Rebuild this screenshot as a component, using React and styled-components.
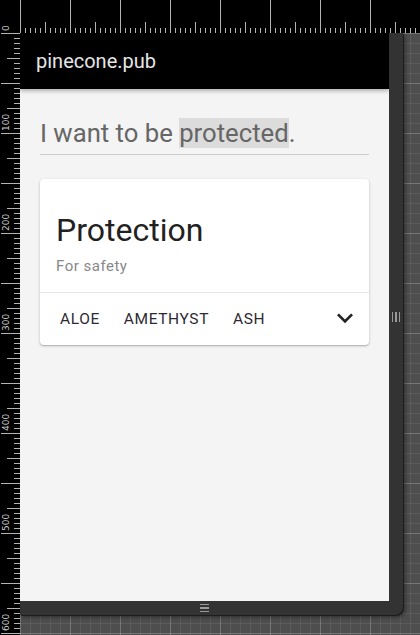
import styled, { createGlobalStyle } from 'styled-components';

const GlobalStyle = createGlobalStyle`
  html, body {
    margin: 0;
    padding: 0;
    background: #000;
  }
  body {
    font-family: Roboto, "Noto Sans", "Liberation Sans", sans-serif;
  }
`;

const Workspace = styled.div`
  display: grid;
  grid-template-columns: 20px 400px;
  grid-template-rows: 33px 602px;
  width: 420px;
  height: 635px;
  overflow: hidden;
  background: #000;
`;

const RulerBox = styled.div`
  background: #000;
  overflow: hidden;
  svg {
    display: block;
  }
  text {
    font-family: "DejaVu Sans", sans-serif;
    font-size: 9px;
    fill: #c8c8c8;
  }
  line {
    stroke: #b4b4b4;
    stroke-width: 1;
  }
`;

const Canvas = styled.div`
  overflow: hidden;
  background-color: #4e4e4e;
  background-image:
    linear-gradient(to right, rgba(255, 255, 255, 0.16) 1px, transparent 1px),
    linear-gradient(to bottom, rgba(255, 255, 255, 0.16) 1px, transparent 1px),
    linear-gradient(to right, rgba(255, 255, 255, 0.07) 1px, transparent 1px),
    linear-gradient(to bottom, rgba(255, 255, 255, 0.07) 1px, transparent 1px);
  background-size: 50px 50px, 50px 50px, 10px 10px, 10px 10px;
`;

const Device = styled.div`
  display: grid;
  grid-template-columns: 369px 14px;
  grid-template-rows: 568px 14px;
  width: max-content;
  background: #333;
  border-bottom-right-radius: 8px;
  box-shadow: 1px 1px 0 #1d1d1d, 2px 2px 4px rgba(0, 0, 0, 0.45);
`;

const Grip = styled.div`
  display: flex;
  flex-direction: ${p => (p.$vertical ? 'row' : 'column')};
  gap: 2px;
  align-self: center;
  justify-self: center;
  span {
    display: block;
    background: #9a9a9a;
    width: ${p => (p.$vertical ? '1.3px' : '9px')};
    height: ${p => (p.$vertical ? '10px' : '1.3px')};
  }
`;

const Screen = styled.div`
  display: flex;
  flex-direction: column;
  background: #f4f4f4;
  overflow: hidden;
`;

const AppBar = styled.header`
  position: relative;
  z-index: 1;
  flex-shrink: 0;
  display: flex;
  align-items: center;
  height: 56px;
  padding: 0 16px;
  background: #000;
  color: #e6e6e6;
  font-size: 20px;
  box-shadow: 0 2px 4px rgba(0, 0, 0, 0.28);
`;

const Content = styled.main`
  padding: 20px;
`;

const Headline = styled.div`
  padding: 8px 0 5px;
  border-bottom: 1px solid #cdcdcd;
  font-size: 25.7px;
  line-height: 32px;
  color: #666;
`;

const Highlight = styled.span`
  background: #dcdcdc;
`;

const Card = styled.section`
  margin-top: 24px;
  background: #fff;
  border-radius: 4px;
  box-shadow: 0 1px 3px rgba(0, 0, 0, 0.22), 0 1px 1px rgba(0, 0, 0, 0.12);
`;

const CardHeader = styled.div`
  padding: 31px 16px 16px;
  border-bottom: 1px solid #e6e6e6;
`;

const Title = styled.h2`
  margin: 0;
  font-size: 32px;
  line-height: 40px;
  font-weight: 400;
  color: #212121;
`;

const Subtitle = styled.p`
  margin: 6px 0 0;
  font-size: 15px;
  line-height: 20px;
  letter-spacing: 0.5px;
  color: #888;
`;

const Actions = styled.div`
  display: flex;
  align-items: center;
  height: 52px;
  padding-left: 8px;
`;

const TextButton = styled.button`
  height: 36px;
  padding: 0 12px;
  border: none;
  background: none;
  font-family: inherit;
  font-size: 15.5px;
  font-weight: 400;
  letter-spacing: 0.6px;
  text-transform: uppercase;
  color: #2e2a33;
  cursor: pointer;
`;

const IconButton = styled.button`
  display: flex;
  align-items: center;
  justify-content: center;
  width: 48px;
  height: 48px;
  margin-left: auto;
  padding: 0;
  border: none;
  background: none;
  color: #222;
  svg {
    margin-top: -2px;
  }
`;

const TopRuler = () => {
  const ticks = [];
  for (let i = 0; i <= 400; i += 5) {
    const y1 = i % 50 === 0 ? 0 : i % 25 === 0 ? 22 : 28;
    ticks.push(<line key={i} x1={i + 0.5} x2={i + 0.5} y1={y1} y2={33} />);
  }
  return (
    <RulerBox>
      <svg width="400" height="33">{ticks}</svg>
    </RulerBox>
  );
};

const LeftRuler = () => {
  const ticks = [];
  for (let j = 0; j <= 602; j += 5) {
    const x1 = j % 50 === 0 ? 1 : j % 25 === 0 ? 7 : 14;
    ticks.push(<line key={'t' + j} x1={x1} x2={20} y1={j + 0.5} y2={j + 0.5} />);
    if (j > 0 && j % 100 === 0) {
      ticks.push(
        <text key={'l' + j} x={9} y={j - 2} transform={`rotate(-90 9 ${j - 2})`}>
          {j}
        </text>
      );
    }
  }
  return (
    <RulerBox>
      <svg width="20" height="602">{ticks}</svg>
    </RulerBox>
  );
};

const Corner = () => (
  <RulerBox>
    <svg width="20" height="33">
      <text x={9} y={31} transform="rotate(-90 9 31)">0</text>
    </svg>
  </RulerBox>
);

const herbs = ['Aloe', 'Amethyst', 'Ash'];

const App = () => {
  return (
    <>
      <GlobalStyle />
      <Workspace>
        <Corner />
        <TopRuler />
        <LeftRuler />
        <Canvas>
          <Device>
            <Screen>
              <AppBar>pinecone.pub</AppBar>
              <Content>
                <Headline>
                  I want to be <Highlight>protected</Highlight>.
                </Headline>
                <Card>
                  <CardHeader>
                    <Title>Protection</Title>
                    <Subtitle>For safety</Subtitle>
                  </CardHeader>
                  <Actions>
                    {herbs.map(h => (
                      <TextButton key={h}>{h}</TextButton>
                    ))}
                    <IconButton aria-label="expand">
                      <svg width="32" height="32" viewBox="0 0 24 24" fill="currentColor">
                        <path d="M16.59 8.59 12 13.17 7.41 8.59 6 10l6 6 6-6z" />
                      </svg>
                    </IconButton>
                  </Actions>
                </Card>
              </Content>
            </Screen>
            <Grip $vertical>
              <span />
              <span />
              <span />
            </Grip>
            <Grip>
              <span />
              <span />
              <span />
            </Grip>
          </Device>
        </Canvas>
      </Workspace>
    </>
  );
};

export default App;
